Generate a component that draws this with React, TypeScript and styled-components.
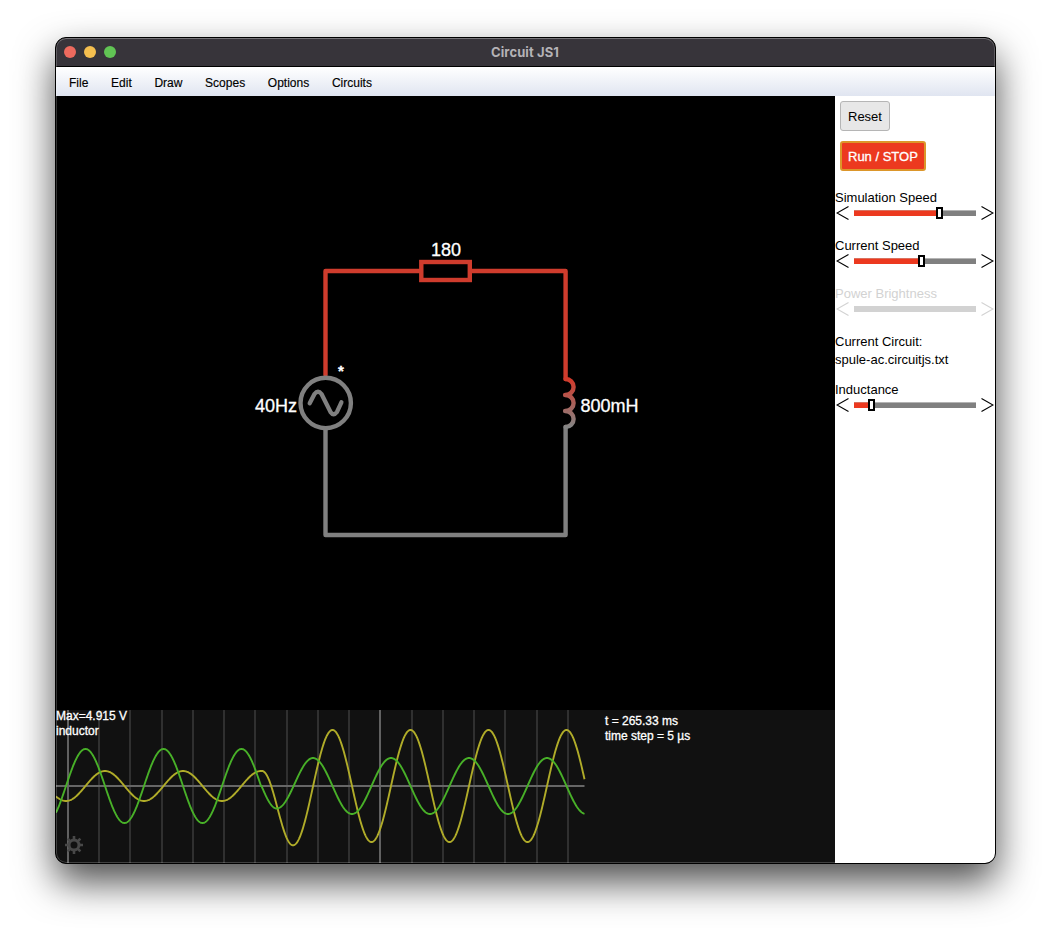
import React from 'react';
import styled, { createGlobalStyle } from 'styled-components';

const GlobalStyle = createGlobalStyle`
  * { box-sizing: border-box; }
  body { margin: 0; background: #fff; }
`;

const Desktop = styled.div`
  width: 1051px;
  height: 937px;
  padding: 37px 55px 73px;
  overflow: hidden;
  background: #fff;
  font-family: 'Liberation Sans', Arial, sans-serif;
`;

const Window = styled.div`
  position: relative;
  display: flex;
  flex-direction: column;
  width: 941px;
  height: 827px;
  border: 1px solid #000;
  border-radius: 11px;
  overflow: hidden;
  background: #000;
  box-shadow: 0 18px 38px rgba(0, 0, 0, 0.7);

  &::after {
    content: '';
    position: absolute;
    inset: 0;
    border-radius: 10px;
    border: 1px solid rgba(255, 255, 255, 0.2);
    border-top-color: rgba(255, 255, 255, 0.32);
    pointer-events: none;
  }
`;

const TitleBar = styled.header`
  display: grid;
  grid-template-columns: 1fr auto 1fr;
  align-items: center;
  flex: none;
  height: 29px;
  padding: 0 9px 0 8px;
  background: #37343a;
  border-bottom: 1px solid #000;
`;

const Lights = styled.div`
  display: flex;
  gap: 8px;
`;

const Light = styled.span<{ $color: string }>`
  width: 12px;
  height: 12px;
  border-radius: 50%;
  background: ${(p) => p.$color};
`;

const Title = styled.h1`
  margin: 0;
  font: 700 13px/16px Inter, sans-serif;
  letter-spacing: 0.1px;
  color: #b4b2b6;
`;

const MenuBar = styled.nav`
  display: flex;
  align-items: center;
  gap: 22.7px;
  flex: none;
  height: 29px;
  padding: 2px 13px 0;
  background: linear-gradient(#fff, #e0e5f1);
  font-size: 12px;
  line-height: 14px;
  color: #000;
  -webkit-text-stroke: 0.15px #000;
`;

const Body = styled.main`
  display: flex;
  flex: 1;
  min-height: 0;
`;

const Workspace = styled.section`
  display: flex;
  flex-direction: column;
  width: 779px;
  background: #000;

  svg { display: block; flex: none; }
  text { fill: #fff; stroke: #fff; stroke-width: 0.3px; }
`;

const Sidebar = styled.aside`
  display: flex;
  flex-direction: column;
  align-items: flex-start;
  flex: 1;
  padding-top: 5px;
  background: #fff;
  font-size: 13px;
  line-height: 18px;
  color: #000;
`;

const Button = styled.button<{ $running?: boolean }>`
  height: 30px;
  margin: 0 0 ${(p) => (p.$running ? 17 : 10)}px 5px;
  padding: 0 ${(p) => (p.$running ? 6 : 7)}px;
  border: ${(p) => (p.$running ? '2px solid #dc962a' : '1px solid #b5b5b5')};
  border-radius: 3px;
  background: ${(p) => (p.$running ? '#ec391f' : '#e7e7e7')};
  color: ${(p) => (p.$running ? '#fff' : '#000')};
  font: 13px 'Liberation Sans', Arial, sans-serif;
  -webkit-text-stroke: ${(p) => (p.$running ? '0.3px' : '0')} currentColor;
`;

const Control = styled.div<{ $disabled?: boolean }>`
  display: flex;
  flex-direction: column;
  width: 160px;
  height: 48px;
  color: ${(p) => (p.$disabled ? '#d2d2d2' : '#000')};
`;

const Label = styled.label`
  height: 18px;
  line-height: 20px;
`;

const SliderRow = styled.div`
  display: flex;
  align-items: center;
  justify-content: space-between;
  height: 14px;
  padding: 0 1px;

  svg { display: block; }
`;

const Track = styled.div<{ $disabled?: boolean }>`
  display: flex;
  align-items: center;
  width: 122px;
  height: 6px;
  background: ${(p) => (p.$disabled ? '#d2d2d2' : '#808080')};
  box-shadow: ${(p) => (p.$disabled ? 'none' : 'inset 0 1px #b4b4b4')};
`;

const Fill = styled.div`
  height: 6px;
  background: #ec391f;
  box-shadow: inset 0 1px #d9715f;
`;

const Thumb = styled.div`
  flex: none;
  width: 7px;
  height: 12px;
  border: 2px solid #000;
  background: #fff;
`;

const CircuitInfo = styled.p`
  margin: 0 0 11px;
  padding-top: 1px;
`;

function Slider({ label, value }: { label: string; value?: number }) {
  const disabled = value === undefined;
  return (
    <Control $disabled={disabled}>
      <Label>{label}</Label>
      <SliderRow>
        <svg width="13" height="14" fill="none" stroke="currentColor" strokeWidth="1.1">
          <path d="M12.5 .5L1 7l11.500 6.500" />
        </svg>
        <Track $disabled={disabled}>
          {!disabled && (
            <>
              <Fill style={{ width: value }} />
              <Thumb />
            </>
          )}
        </Track>
        <svg width="13" height="14" fill="none" stroke="currentColor" strokeWidth="1.1">
          <path d="M.5 .5L12 7L.5 13.500" />
        </svg>
      </SliderRow>
    </Control>
  );
}

function Circuit() {
  return (
    <svg width="779" height="614" viewBox="56 96 779 614" fill="none" strokeWidth="4.400" strokeLinecap="round">
      <defs>
        <linearGradient id="coil" gradientUnits="userSpaceOnUse" x1="0" y1="379" x2="0" y2="427">
          <stop offset="0" stopColor="#d23a2b" />
          <stop offset="1" stopColor="#858585" />
        </linearGradient>
      </defs>
      <g stroke="#cf3c2d" strokeLinejoin="round">
        <path d="M325.500 375V271H419M472 271H565.600V379" />
        <rect x="421.300" y="262" width="48.500" height="18" strokeWidth="4.400" strokeLinejoin="miter" />
      </g>
      <g stroke="#808080">
        <path d="M325.500 430V535H565.600V427" strokeLinejoin="round" />
        <circle cx="325.700" cy="403" r="25.200" />
        <path
          d="M309.700 403.300L314.500 394Q318 389.500 321.500 394L330.500 412Q333.500 416.500 337 412L341.400 402.300"
          strokeWidth="4.300"
        />
      </g>
      <path d="M565.600 379a8 8 0 0 1 0 16a8 8 0 0 1 0 16a8 8 0 0 1 0 16" stroke="url(#coil)" />
      <path d="M565.600 395h-.5M565.600 411h-.5" stroke="url(#coil)" />
      <g fontSize="18">
        <text x="431" y="256.300">180</text>
        <text x="255" y="411.800">40Hz</text>
        <text x="580.500" y="411.800">800mH</text>
        <text x="337.900" y="375.500" fontSize="15" fontWeight="bold">*</text>
      </g>
    </svg>
  );
}

const CENTER = 786;
const START = 56;
const END = 584.5;

const wave = (x: number, peak: number, amp: number) =>
  CENTER - amp * Math.cos(((x - peak) / 78) * 2 * Math.PI);

const ease = (x: number, x0: number, x1: number, y0: number, y1: number) =>
  y0 + ((y1 - y0) * (1 - Math.cos(((x - x0) / (x1 - x0)) * Math.PI))) / 2;

function currentAt(x: number) {
  if (x < 261.5) return wave(x, 85.5, 37);
  if (x < 276.7) return CENTER + 22.5 * Math.sin(((x - 261.5) / 15.2) * (Math.PI / 2));
  if (x < 313) return ease(x, 276.7, 313, 808.5, 758);
  return wave(x, 313, 28);
}

function voltageAt(x: number) {
  if (x < 262) return wave(x, 105, 15);
  if (x < 293) return ease(x, 262, 293, 771, 845.3);
  if (x < 332.5) return ease(x, 293, 332.5, 845.3, 730);
  return wave(x, 332.5, 56);
}

function trace(fn: (x: number) => number) {
  const points: string[] = [];
  for (let x = START; x <= END; x += 0.5) points.push(`${x},${fn(x).toFixed(2)}`);
  return points.join(' ');
}

const gridLines = Array.from({ length: 17 }, (_, i) => ({
  x: Math.round(67.7 + 31.27 * i) - 1,
  major: i === 0 || i === 10,
}));

function Scope() {
  return (
    <svg width="779" height="153" viewBox="56 710 779 153" fontSize="12">
      <rect x="56" y="710" width="779" height="153" fill="#111" />
      {gridLines.map((g) => (
        <rect key={g.x} x={g.x} y="710" width="2" height="153" fill={g.major ? '#616161' : '#303030'} />
      ))}
      <rect x="56" y="785" width="528.500" height="2" fill="#666" />
      <g fill="none" strokeWidth="1.900">
        <polyline points={trace(voltageAt)} stroke="#b0ac29" />
        <polyline points={trace(currentAt)} stroke="#48b028" />
      </g>
      <g stroke="#484848" fill="none">
        <circle cx="74" cy="845" r="5" strokeWidth="3" />
        {[0, 45, 90, 135, 180, 225, 270, 315].map((a) => (
          <path key={a} d="M74 839.500V836" strokeWidth="2.600" transform={`rotate(${a} 74 845)`} />
        ))}
      </g>
      <text x="56" y="720">Max=4.915 V</text>
      <text x="56" y="735">inductor</text>
      <text x="605" y="725">t = 265.33 ms</text>
      <text x="605" y="740">time step = 5 µs</text>
    </svg>
  );
}

export default function App() {
  return (
    <>
      <GlobalStyle />
      <Desktop>
        <Window>
          <TitleBar>
            <Lights>
              <Light $color="#ed6a5e" />
              <Light $color="#f5bf4f" />
              <Light $color="#61c454" />
            </Lights>
            <Title>Circuit JS1</Title>
          </TitleBar>
          <MenuBar>
            {['File', 'Edit', 'Draw', 'Scopes', 'Options', 'Circuits'].map((m) => (
              <span key={m}>{m}</span>
            ))}
          </MenuBar>
          <Body>
            <Workspace>
              <Circuit />
              <Scope />
            </Workspace>
            <Sidebar>
              <Button>Reset</Button>
              <Button $running>Run / STOP</Button>
              <Slider label="Simulation Speed" value={82} />
              <Slider label="Current Speed" value={64} />
              <Slider label="Power Brightness" />
              <CircuitInfo>
                Current Circuit:
                <br />
                spule-ac.circuitjs.txt
              </CircuitInfo>
              <Slider label="Inductance" value={14} />
            </Sidebar>
          </Body>
        </Window>
      </Desktop>
    </>
  );
}
